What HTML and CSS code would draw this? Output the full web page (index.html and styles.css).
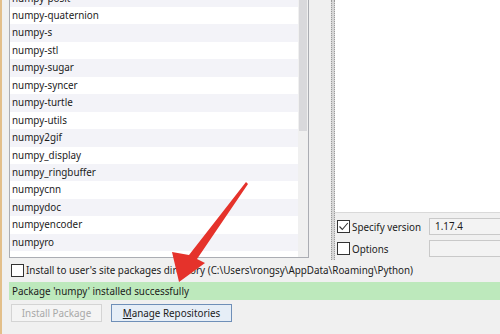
FILE: index.html
```html
<!DOCTYPE html>
<html lang="en">
<head>
    <meta charset="UTF-8">
    <meta name="viewport" content="width=device-width, initial-scale=1.0">
    <title>Available Packages</title>
    <link rel="stylesheet" href="styles.css">
</head>
<body>
    <div class="main">
        <div class="left">
            <div class="list">
                <div class="rows">
                    <div class="row alt">numpy-posit</div>
                    <div class="row">numpy-quaternion</div>
                    <div class="row alt">numpy-s</div>
                    <div class="row">numpy-stl</div>
                    <div class="row alt">numpy-sugar</div>
                    <div class="row">numpy-syncer</div>
                    <div class="row alt">numpy-turtle</div>
                    <div class="row">numpy-utils</div>
                    <div class="row alt">numpy2gif</div>
                    <div class="row">numpy_display</div>
                    <div class="row alt">numpy_ringbuffer</div>
                    <div class="row">numpycnn</div>
                    <div class="row alt">numpydoc</div>
                    <div class="row">numpyencoder</div>
                    <div class="row alt">numpyro</div>
                </div>
                <div class="scrollbar">
                    <div class="thumb"></div>
                </div>
            </div>
        </div>
        <div class="splitter"></div>
        <div class="right">
            <div class="desc"></div>
            <div class="opts">
                <div class="opt">
                    <span class="cb checked">
                        <svg width="11" height="11" viewBox="0 0 11 11"><path d="M1.5 5.5 L4.3 8.5 L9.8 2" fill="none" stroke="#333" stroke-width="1.1"/></svg>
                    </span>
                    <span class="opt-label">Specify version</span>
                    <span class="field">1.17.4</span>
                </div>
                <div class="opt">
                    <span class="cb"></span>
                    <span class="opt-label">Options</span>
                    <span class="field"></span>
                </div>
            </div>
        </div>
    </div>

    <div class="bottom">
        <div class="install-row">
            <span class="cb"></span>
            <span>Install to user's site packages directory (C:\Users\rongsy\AppData\Roaming\Python)</span>
        </div>
        <div class="status">Package 'numpy' installed successfully</div>
        <div class="buttons">
            <button class="btn disabled">Install Package</button>
            <button class="btn default"><u>M</u>anage Repositories</button>
        </div>
    </div>

    <svg class="arrow" width="500" height="334" viewBox="0 0 500 334">
        <path d="M246 182 L248 184 L197 259 L205 263 L179 282 L172 252 L189 255 Z" fill="#e5322b"/>
    </svg>
</body>
</html>
```

FILE: styles.css
```css
body {
    margin: 0;
    width: 498px;
    height: 334px;
    overflow: hidden;
    position: relative;
    background-color: #f0f0f0;
    border-left: 2px solid #e3bf8a;
    font-family: "Noto Sans", sans-serif;
    font-size: 9.85px;
    color: #1b1b1b;
}
.main {
    display: flex;
    height: 260px;
}
.left {
    padding-left: 7px;
    width: 300px;
    display: flex;
}
.list {
    flex: 1;
    display: flex;
    margin-top: -11.5px;
    margin-bottom: 2px;
    border: 1px solid #abadb3;
    background-color: white;
}
.rows {
    flex: 1;
}
.row {
    height: 17.46px;
    line-height: 17.46px;
    padding-left: 2px;
    white-space: nowrap;
}
.alt {
    background-color: #f3f3f8;
}
.scrollbar {
    width: 10px;
    background-color: #f0f0f0;
}
.thumb {
    height: 141px;
    margin: 0 1px;
    background-color: #d9d9dc;
}
.splitter {
    margin-left: 22px;
    width: 2px;
    border-left: 1px dotted #9a9a9a;
    border-right: 1px dotted #9a9a9a;
    background-color: #d6d6d6;
}
.right {
    flex: 1;
    display: flex;
    flex-direction: column;
}
.desc {
    flex: 1;
    background-color: white;
    border-bottom: 1px solid #d9d9d9;
}
.opts {
    padding: 5px 0 3px 2px;
    display: flex;
    flex-direction: column;
    gap: 5px;
}
.opt {
    display: flex;
    align-items: center;
    height: 17px;
}
.cb {
    width: 11px;
    height: 11px;
    border: 1px solid #333;
    background-color: white;
    display: inline-flex;
    flex-shrink: 0;
}
.opt-label {
    margin-left: 2px;
    width: 77px;
}
.field {
    flex: 1;
    height: 15px;
    line-height: 15px;
    padding-left: 5px;
    border: 1px solid #c9c9c9;
    border-right: none;
    background-color: #f3f3f3;
}
.bottom {
    padding-left: 7px;
}
.install-row {
    display: flex;
    align-items: center;
    gap: 2px;
    margin: 4px 0 0 2px;
    height: 12px;
    white-space: nowrap;
}
.status {
    margin-top: 6px;
    height: 18px;
    line-height: 18px;
    padding-left: 3px;
    background-color: #bde9bc;
}
.buttons {
    display: flex;
    gap: 9px;
    margin: 4px 0 0 2px;
}
.btn {
    height: 18px;
    padding: 0;
    font-family: "Noto Sans", sans-serif;
    font-size: 9.85px;
    border: 1px solid #adadad;
    background-color: #e1e1e1;
    color: #1b1b1b;
}
.disabled {
    width: 91px;
    border-color: #d4d4d4;
    background-color: #f4f4f4;
    color: #a8a8a8;
}
.default {
    width: 121px;
    border-color: #6f8fb8;
    background-color: #e6eef7;
}
.arrow {
    position: absolute;
    left: -2px;
    top: 0;
}
```
